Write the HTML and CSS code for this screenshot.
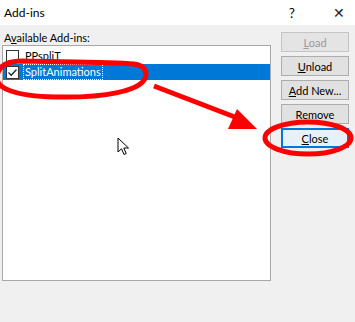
FILE: index.html
```html
<!DOCTYPE html>
<html lang="en">
<head>
  <meta charset="UTF-8">
  <title>Add-ins</title>
  <link rel="stylesheet" href="styles.css">
</head>
<body>
  <div class="dialog">
    <div class="titlebar">
      <span class="title">Add-ins</span>
      <span class="help">?</span>
      <span class="close-x">&#x2715;</span>
    </div>

    <div class="content">
      <div class="list-col">
        <div class="label">A<u>v</u>ailable Add-ins:</div>
        <div class="listbox">
          <div class="item">
            <span class="check"></span>
            <span class="item-text">PPspliT</span>
          </div>
          <div class="item selected">
            <span class="check">
              <svg width="11" height="11" viewBox="0 0 11 11"><path d="M1.5 5.5 L4.2 8.2 L9.5 2.5" fill="none" stroke="#222" stroke-width="1.3"/></svg>
            </span>
            <span class="item-text focus">SplitAnimations</span>
          </div>
        </div>
      </div>

      <div class="buttons">
        <button class="btn" disabled><u>L</u>oad</button>
        <button class="btn"><u>U</u>nload</button>
        <button class="btn"><u>A</u>dd New...</button>
        <button class="btn">Remove</button>
        <button class="btn default"><u>C</u>lose</button>
      </div>
    </div>

    <!-- cursor -->
    <svg class="cursor" width="14" height="20" viewBox="0 0 14 20">
      <path d="M1 1 L1 15 L4.5 11.8 L7 17.5 L9.2 16.5 L6.8 11 L11.5 11 Z" fill="#fff" stroke="#000" stroke-width="1"/>
    </svg>

    <!-- red annotations -->
    <svg class="annot" width="355" height="322" viewBox="0 0 355 322">
      <path d="M146 74 C146 92 100 98 55 97 C14 96 -4 88 -3 77 C-2 66 6 61 22 61 C62 62 110 62 134 64 C142 65 146 69 146 74 Z" fill="none" stroke="#ff0000" stroke-width="5"/>
      <ellipse cx="308" cy="138" rx="43" ry="16" fill="none" stroke="#ff0000" stroke-width="5"/>
      <line x1="154" y1="86" x2="240" y2="119" stroke="#ff0000" stroke-width="5"/>
      <polygon points="237,109 257,129 228,129" fill="#ff0000"/>
    </svg>
  </div>
</body>
</html>
```

FILE: styles.css
```css
body {
  margin: 0;
  font-family: "Segoe UI", Lato, "Noto Sans", sans-serif;
  font-size: 11px;
  color: #000;
  background: #f0f0f0;
}
.dialog {
  position: relative;
  width: 355px;
  height: 322px;
  overflow: hidden;
  background: #f0f0f0;
}
.titlebar {
  display: flex;
  align-items: center;
  height: 25px;
  background: #fff;
  padding: 0 0 0 4px;
}
.title {
  flex: 1;
  font-size: 12px;
}
.help {
  width: 10px;
  margin-right: 34px;
  font-size: 13px;
}
.close-x {
  width: 22px;
  font-size: 14px;
  color: #222;
}
.content {
  display: flex;
  padding: 5px 0 0 2px;
}
.list-col {
  width: 269px;
}
.label {
  height: 15px;
  line-height: 15px;
  padding-left: 2px;
}
.listbox {
  height: 232px;
  background: #fff;
  border: 1px solid #a8a8a8;
  padding-top: 2px;
  box-sizing: content-box;
}
.item {
  display: flex;
  align-items: center;
  height: 16px;
  padding-left: 3px;
}
.item.selected {
  background: #0078d7;
  color: #fff;
}
.check {
  display: flex;
  align-items: center;
  justify-content: center;
  width: 11px;
  height: 11px;
  border: 1px solid #333;
  background: #fff;
  margin-right: 5px;
}
.item-text {
  padding: 0 1px;
  line-height: 14px;
}
.focus {
  outline: 1px dotted #fff;
}
.buttons {
  display: flex;
  flex-direction: column;
  gap: 4px;
  margin-left: 10px;
  padding-top: 2px;
}
.btn {
  width: 68px;
  height: 20px;
  padding: 0;
  font-family: inherit;
  font-size: 11px;
  color: #000;
  background: #e1e1e1;
  border: 1px solid #adadad;
}
.btn:disabled {
  color: #9a9a9a;
  background: #e4e4e4;
  border-color: #c4c4c4;
}
.btn.default {
  background: #e5f1fb;
  border: 2px solid #0078d7;
}
.cursor {
  position: absolute;
  left: 117px;
  top: 137px;
}
.annot {
  position: absolute;
  left: 0;
  top: 0;
  pointer-events: none;
}
```
